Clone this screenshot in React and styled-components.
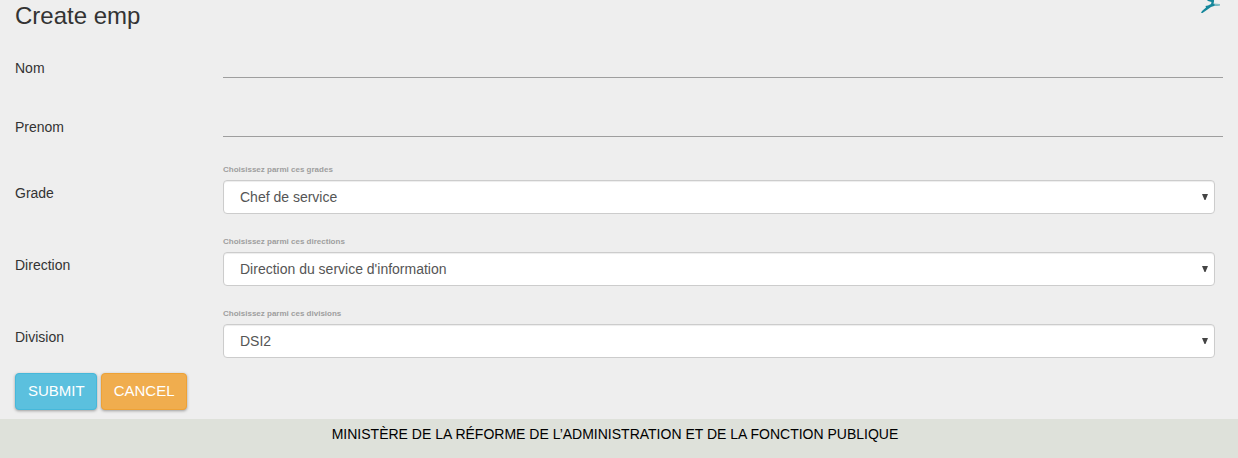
import React from "react";
import styled, { createGlobalStyle } from "styled-components";

const GlobalStyle = createGlobalStyle`
  * { box-sizing: border-box; }
  body {
    margin: 0;
    background: #eee;
    color: #333;
    font: 14px/20px "Liberation Sans", Arial, sans-serif;
  }
`;

const Header = styled.header`
  display: flex;
  justify-content: space-between;
  align-items: flex-start;
  height: 34px;
  padding: 0 16px 0 15px;
`;

const Title = styled.h1`
  margin: 0;
  font-size: 24px;
  font-weight: 400;
  line-height: 32px;
`;

const Logo = styled.svg`
  display: block;
  width: 22px;
  height: 14px;
`;

const Form = styled.form`
  padding: 0 15px 9px;
`;

const Fields = styled.div`
  display: flex;
  flex-direction: column;
  gap: ${(p) => p.$gap}px;
  margin-bottom: ${(p) => p.$after}px;
`;

const Row = styled.div`
  display: grid;
  grid-template-columns: 208px 1fr;
`;

const Label = styled.label`
  padding-top: ${(p) => p.$top}px;
`;

const TextInput = styled.input`
  width: 100%;
  height: 44px;
  padding: 12px 0 0;
  border: 0;
  border-bottom: 1px solid #9e9e9e;
  border-radius: 0;
  outline: 0;
  background: transparent;
  color: #333;
  font: inherit;
`;

const Choice = styled.div`
  display: flex;
  flex-direction: column;
  gap: 2px;
  padding-right: 8px;
`;

const Hint = styled.span`
  color: #9e9e9e;
  font-size: 8px;
  font-weight: 700;
  line-height: 16px;
`;

const SelectBox = styled.div`
  position: relative;
`;

const Select = styled.select`
  display: block;
  appearance: none;
  width: 100%;
  height: 34px;
  padding: 0 16px;
  border: 1px solid #ccc;
  border-radius: 4px;
  background: #fff;
  box-shadow: inset 0 1px 1px rgba(0, 0, 0, 0.075);
  color: #555;
  font: inherit;
`;

const Arrow = styled.svg`
  position: absolute;
  top: 14px;
  right: 7px;
  width: 6px;
  height: 6px;
  fill: #444;
  pointer-events: none;
`;

const Actions = styled.div`
  display: flex;
  gap: 4px;
`;

const Button = styled.button`
  height: 37px;
  padding: 0 11px 2px 12px;
  border: 1px solid ${(p) => p.$border};
  border-radius: 4px;
  background: ${(p) => p.$fill};
  box-shadow: 0 1px 3px rgba(0, 0, 0, 0.35);
  color: #fff;
  font: inherit;
  font-size: 15px;
  text-transform: uppercase;
  cursor: pointer;
`;

const Footer = styled.footer`
  padding: 5px 8px 14px 0;
  background: #dee1da;
  color: #000;
  text-align: center;
`;

const textFields = [
  { id: "nom", label: "Nom" },
  { id: "prenom", label: "Prenom" },
];

const selectFields = [
  { id: "grade", label: "Grade", hint: "Choisissez parmi ces grades", value: "Chef de service" },
  { id: "direction", label: "Direction", hint: "Choisissez parmi ces directions", value: "Direction du service d'information" },
  { id: "division", label: "Division", hint: "Choisissez parmi ces divisions", value: "DSI2" },
];

export default function App() {
  return (
    <>
      <GlobalStyle />
      <Header>
        <Title>Create emp</Title>
        <Logo viewBox="0 0 22 14" aria-hidden="true">
          <path d="M7 0h7l0 1.5-.5 2.3L20 4v1.2l-6 .8-3 1-3.500 2.500L2.500 13H1l1-2 4-3.500L5.500 6 8 5.500 11 4l.5-2L8 1Z" fill="#16879b" />
          <path d="M14.500 4H20v1.300l-5.500.7Z" fill="#83bec5" />
        </Logo>
      </Header>
      <Form onSubmit={(e) => e.preventDefault()}>
        <Fields $gap={15} $after={25}>
          {textFields.map((f) => (
            <Row key={f.id}>
              <Label htmlFor={f.id} $top={24}>{f.label}</Label>
              <TextInput id={f.id} type="text" />
            </Row>
          ))}
        </Fields>
        <Fields $gap={20} $after={15}>
          {selectFields.map((f) => (
            <Row key={f.id}>
              <Label htmlFor={f.id} $top={21}>{f.label}</Label>
              <Choice>
                <Hint id={`${f.id}-hint`}>{f.hint}</Hint>
                <SelectBox>
                  <Select id={f.id} aria-describedby={`${f.id}-hint`}>
                    <option>{f.value}</option>
                  </Select>
                  <Arrow viewBox="0 0 6 6" aria-hidden="true">
                    <path d="M0 0h6L3.500 6h-1Z" />
                  </Arrow>
                </SelectBox>
              </Choice>
            </Row>
          ))}
        </Fields>
        <Actions>
          <Button type="submit" $fill="#5bc0de" $border="#46b8da">Submit</Button>
          <Button type="button" $fill="#f0ad4e" $border="#eea236">Cancel</Button>
        </Actions>
      </Form>
      <Footer>MINISTÈRE DE LA RÉFORME DE L’ADMINISTRATION ET DE LA FONCTION PUBLIQUE</Footer>
    </>
  );
}
